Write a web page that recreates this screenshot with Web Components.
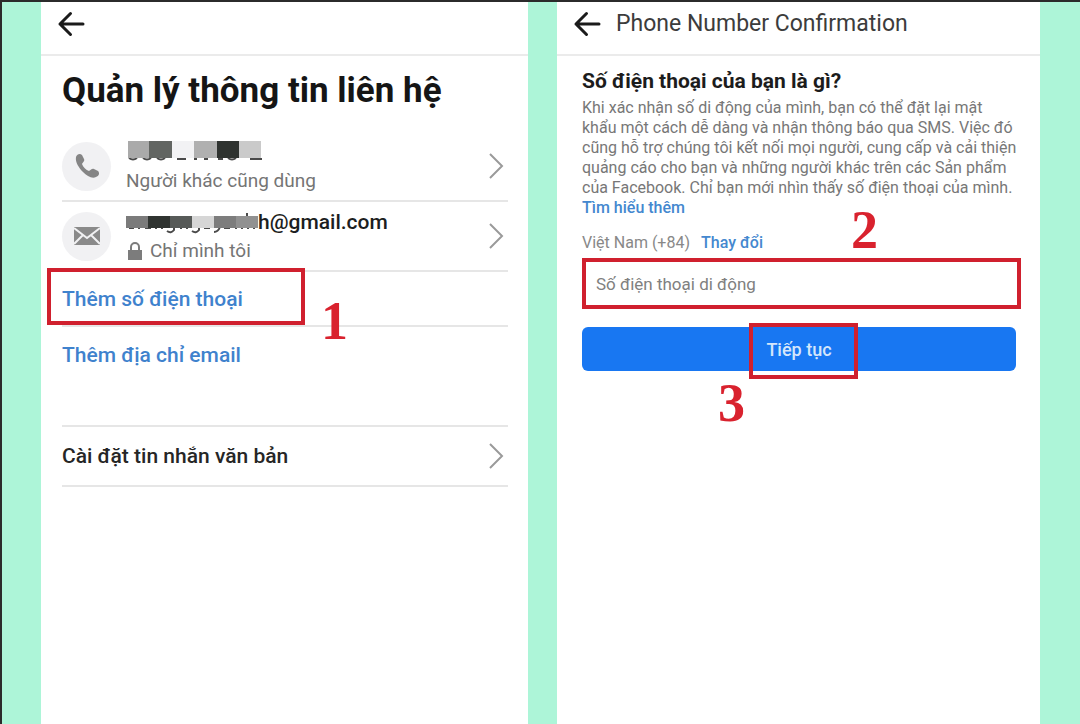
<!DOCTYPE html>
<html lang="vi">
<head>
<meta charset="utf-8">
<meta name="viewport" content="width=device-width, initial-scale=1">
<title>Quản lý thông tin liên hệ</title>
<style>
  body {
    margin: 0;
    font-family: Roboto, "Liberation Sans", sans-serif;
    color: #1c1e21;
  }
</style>
</head>
<body>
<guide-board>
  <phone-screen>
    <contact-list></contact-list>
  </phone-screen>
  <phone-screen heading="Phone Number Confirmation">
    <phone-form></phone-form>
  </phone-screen>
</guide-board>

<script>
const define = (name, html, setup) => {
  const template = document.createElement('template');
  template.innerHTML = html;

  customElements.define(name, class extends HTMLElement {
    constructor() {
      super();
      this.attachShadow({ mode: 'open' });
      this.shadowRoot.appendChild(template.content.cloneNode(true));
    }

    connectedCallback() {
      if (setup) setup(this, this.shadowRoot);
    }
  });
};

define('guide-board', `
  <style>
    :host {
      display: grid;
      grid-template-columns: 487fr 483fr;
      gap: 29px;
      box-sizing: border-box;
      min-height: 100vh;
      padding: 0 40px 0 39px;
      border-top: 2px solid #2b2b2b;
      border-left: 2px solid #2b2b2b;
      background: #adf5d8;
    }
  </style>
  <slot></slot>
`);

define('phone-screen', `
  <style>
    :host {
      display: block;
      min-width: 0;
      background: #fff;
    }
    header {
      display: flex;
      align-items: center;
      gap: 15px;
      height: 44px;
      padding: 0 16px 8px;
      border-bottom: 2px solid #ebebeb;
    }
    button {
      display: flex;
      padding: 0;
      border: none;
      background: none;
      cursor: pointer;
    }
    span {
      font-size: 23px;
      line-height: 28px;
      color: #3c3c3c;
      white-space: nowrap;
    }
  </style>
  <header>
    <button type="button" aria-label="Back">
      <svg width="28" height="28" viewBox="0 0 28 28" fill="none" stroke="#1b1b1b" stroke-width="3" stroke-linecap="round" stroke-linejoin="round">
        <path d="M26 14H3M13.500 3.500L3 14l10.500 10.500"/>
      </svg>
    </button>
    <span></span>
  </header>
  <slot></slot>
`, (host, root) => {
  root.querySelector('span').textContent = host.getAttribute('heading') || '';
});

// red frame with a step number beside it
define('step-mark', `
  <style>
    :host {
      position: absolute;
      inset: var(--frame);
      border: 4px solid #d0202e;
      pointer-events: none;
    }
    b {
      position: absolute;
      inset: var(--digit);
      font: bold 54px/54px "Liberation Serif", serif;
      color: #d9222e;
    }
  </style>
  <b><slot></slot></b>
`);

define('chevron-icon', `
  <style>
    :host { display: flex; }
  </style>
  <svg width="24" height="28" viewBox="0 0 24 28" fill="none" stroke="#9a9a9a" stroke-width="2">
    <path d="M6 2l12 12L6 26"/>
  </svg>
`);

define('contact-row', `
  <style>
    :host {
      display: flex;
      align-items: center;
      gap: 15px;
      height: 68px;
      border-bottom: 2px solid #e6e6e6;
    }
    .icon {
      display: flex;
      align-items: center;
      justify-content: center;
      width: 49px;
      height: 49px;
      border-radius: 50%;
      background: #f1f1f3;
    }
    .text {
      flex: 1;
      display: flex;
      flex-direction: column;
      gap: 4px;
    }
    .name {
      display: flex;
      align-items: center;
      height: 26px;
      font-size: 21px;
      font-weight: 500;
      line-height: 26px;
    }
    .note {
      display: flex;
      align-items: center;
      gap: 8px;
      font-size: 19px;
      line-height: 24px;
      color: #757575;
    }
  </style>
  <div class="icon"><slot name="icon"></slot></div>
  <div class="text">
    <div class="name"><slot name="name"></slot></div>
    <div class="note"><slot></slot></div>
  </div>
  <chevron-icon></chevron-icon>
`);

define('contact-list', `
  <style>
    :host {
      display: block;
      padding: 0 20px 0 21px;
    }
    h1 {
      margin: 13px 0 19px;
      font-size: 35px;
      font-weight: 700;
      line-height: 44px;
      white-space: nowrap;
      color: #151515;
    }
    svg {
      display: block;
    }
    .add {
      position: relative;
      display: flex;
      align-items: center;
      height: 53px;
      border-bottom: 2px solid #e6e6e6;
    }
    .add.last {
      border: none;
      height: 55px;
    }
    a {
      font-size: 21px;
      font-weight: 500;
      line-height: 28px;
      color: #3f82cd;
      text-decoration: none;
    }
    step-mark {
      --frame: -4px 203px 0 -15px;
      --digit: 22px auto auto 270px;
    }
    .settings {
      display: flex;
      align-items: center;
      justify-content: space-between;
      height: 58px;
      margin-top: 43px;
      border: solid #e6e6e6;
      border-width: 2px 0;
    }
    .settings a {
      color: #262626;
    }
  </style>
  <h1>Quản lý thông tin liên hệ</h1>
  <contact-row>
    <svg slot="icon" width="26" height="26" viewBox="0 0 26 26" fill="#858585">
      <path d="M2 4C3 1 6 0 8 2l2 4c1 2-1 3-2 5 1 3 4 6 7 7 2-1 3-3 5-2l4 2c2 2 1 5-2 6-4 2-9-1-13-5S1 9 2 4z"/>
    </svg>
    <svg slot="name" width="140" height="22" viewBox="0 0 140 22" aria-label="Số điện thoại đã ẩn" role="img">
      <path fill="none" stroke="#4a4a4a" stroke-width="2" d="M3 17q4 3 8 0M17 17q4 3 8 0M31 17q4 3 8 0M51 18h9M68 18h3M78 18h4M92 18h5M102 17q4 3 8 0M124 18h12"/>
      <path fill="#aaa" d="M2 0h21v17H2z"/>
      <path fill="#626562" d="M23 0h23v17H23z"/>
      <path fill="#f2f2f4" d="M46 0h22v17H46z"/>
      <path fill="#b0b0b0" d="M68 0h23v17H68z"/>
      <path fill="#2f3330" d="M91 0h22v17H91z"/>
      <path fill="#cacaca" d="M113 0h22v17h-22z"/>
    </svg>
    Người khác cũng dùng
  </contact-row>
  <contact-row>
    <svg slot="icon" width="26" height="18" viewBox="0 0 26 18">
      <path fill="#8a8a8a" d="M0 0h26v18H0z"/>
      <path fill="none" stroke="#f1f1f3" stroke-width="2" d="M0 1l13 10L26 1M0 17l9-9M26 17l-9-9"/>
    </svg>
    <svg slot="name" width="132" height="24" viewBox="0 0 132 24" aria-label="Đã ẩn" role="img">
      <path fill="none" stroke="#4a4a4a" stroke-width="2" d="M3 18h5M12 18h2M19 18h6M29 18h2M35 18h2M41 21q4 3 7-1v-3M54 18h2M60 18h2M66 21q4 3 7-1v-3M78 18h6M88 22q4 0 6-5M98 18h6M109 18h2M115 18h2M121 3v3M121 18h2M127 18h2"/>
      <path fill="#7b7b7b" d="M0 6h22v12H0z"/>
      <path fill="#303431" d="M22 6h22v12H22z"/>
      <path fill="#575a58" d="M44 6h22v12H44z"/>
      <path fill="#d6d6d6" d="M66 6h22v12H66z"/>
      <path fill="#7d7d7d" d="M88 6h22v12H88z"/>
      <path fill="#919191" d="M110 6h22v12h-22z"/>
    </svg>
    <span slot="name">h@gmail.com</span>
    <svg width="16" height="18" viewBox="0 0 16 18">
      <path fill="#7c7c7c" d="M2 8h14v10H2z"/>
      <path fill="none" stroke="#7c7c7c" stroke-width="2" d="M5 9V5a4 4 0 0 1 8 0v4"/>
    </svg>
    <span>Chỉ mình tôi</span>
  </contact-row>
  <div class="add">
    <a href="#phone">Thêm số điện thoại</a>
    <step-mark>1</step-mark>
  </div>
  <div class="add last"><a href="#email">Thêm địa chỉ email</a></div>
  <div class="settings">
    <a href="#sms">Cài đặt tin nhắn văn bản</a>
    <chevron-icon></chevron-icon>
  </div>
`);

define('phone-form', `
  <style>
    :host {
      display: block;
      padding: 10px 24px 0 25px;
    }
    h2 {
      margin: 0;
      font-size: 21px;
      font-weight: 700;
      line-height: 30px;
      color: #1c1c1c;
    }
    p {
      margin: 2px 0 15px;
      font-size: 16px;
      line-height: 20px;
      color: #777;
      white-space: nowrap;
    }
    a {
      font-weight: 500;
      color: #4488cf;
      text-decoration: none;
    }
    .country {
      display: flex;
      gap: 11px;
      font-size: 16px;
      line-height: 20px;
      color: #888;
    }
    .field, .submit {
      position: relative;
      display: flex;
    }
    .field {
      margin: 8px 0 21px;
    }
    input {
      flex: 1;
      min-width: 0;
      height: 45px;
      padding: 0 14px;
      border: none;
      background: none;
      font: 17px Roboto, "Liberation Sans", sans-serif;
    }
    input::placeholder {
      color: #808080;
      opacity: 1;
    }
    button {
      flex: 1;
      height: 44px;
      border: none;
      border-radius: 6px;
      background: #1877f2;
      font: 500 18px Roboto, "Liberation Sans", sans-serif;
      color: #d5e6fb;
      cursor: pointer;
    }
    .field step-mark {
      --frame: -3px -5px -3px 0;
      --digit: -59px 139px auto auto;
    }
    .submit step-mark {
      --frame: -4px calc(50% - 59px) -8px calc(50% - 50px);
      --digit: 49px auto auto -35px;
    }
  </style>
  <h2>Số điện thoại của bạn là gì?</h2>
  <p>
    Khi xác nhận số di động của mình, bạn có thể đặt lại mật<br>
    khẩu một cách dễ dàng và nhận thông báo qua SMS. Việc đó<br>
    cũng hỗ trợ chúng tôi kết nối mọi người, cung cấp và cải thiện<br>
    quảng cáo cho bạn và những người khác trên các Sản phẩm<br>
    của Facebook. Chỉ bạn mới nhìn thấy số điện thoại của mình.<br>
    <a href="#more">Tìm hiểu thêm</a>
  </p>
  <div class="country"><span>Việt Nam (+84)</span><a href="#country">Thay đổi</a></div>
  <div class="field">
    <input type="tel" aria-label="Số điện thoại di động" placeholder="Số điện thoại di động">
    <step-mark>2</step-mark>
  </div>
  <div class="submit">
    <button type="button">Tiếp tục</button>
    <step-mark>3</step-mark>
  </div>
`);
</script>
</body>
</html>
